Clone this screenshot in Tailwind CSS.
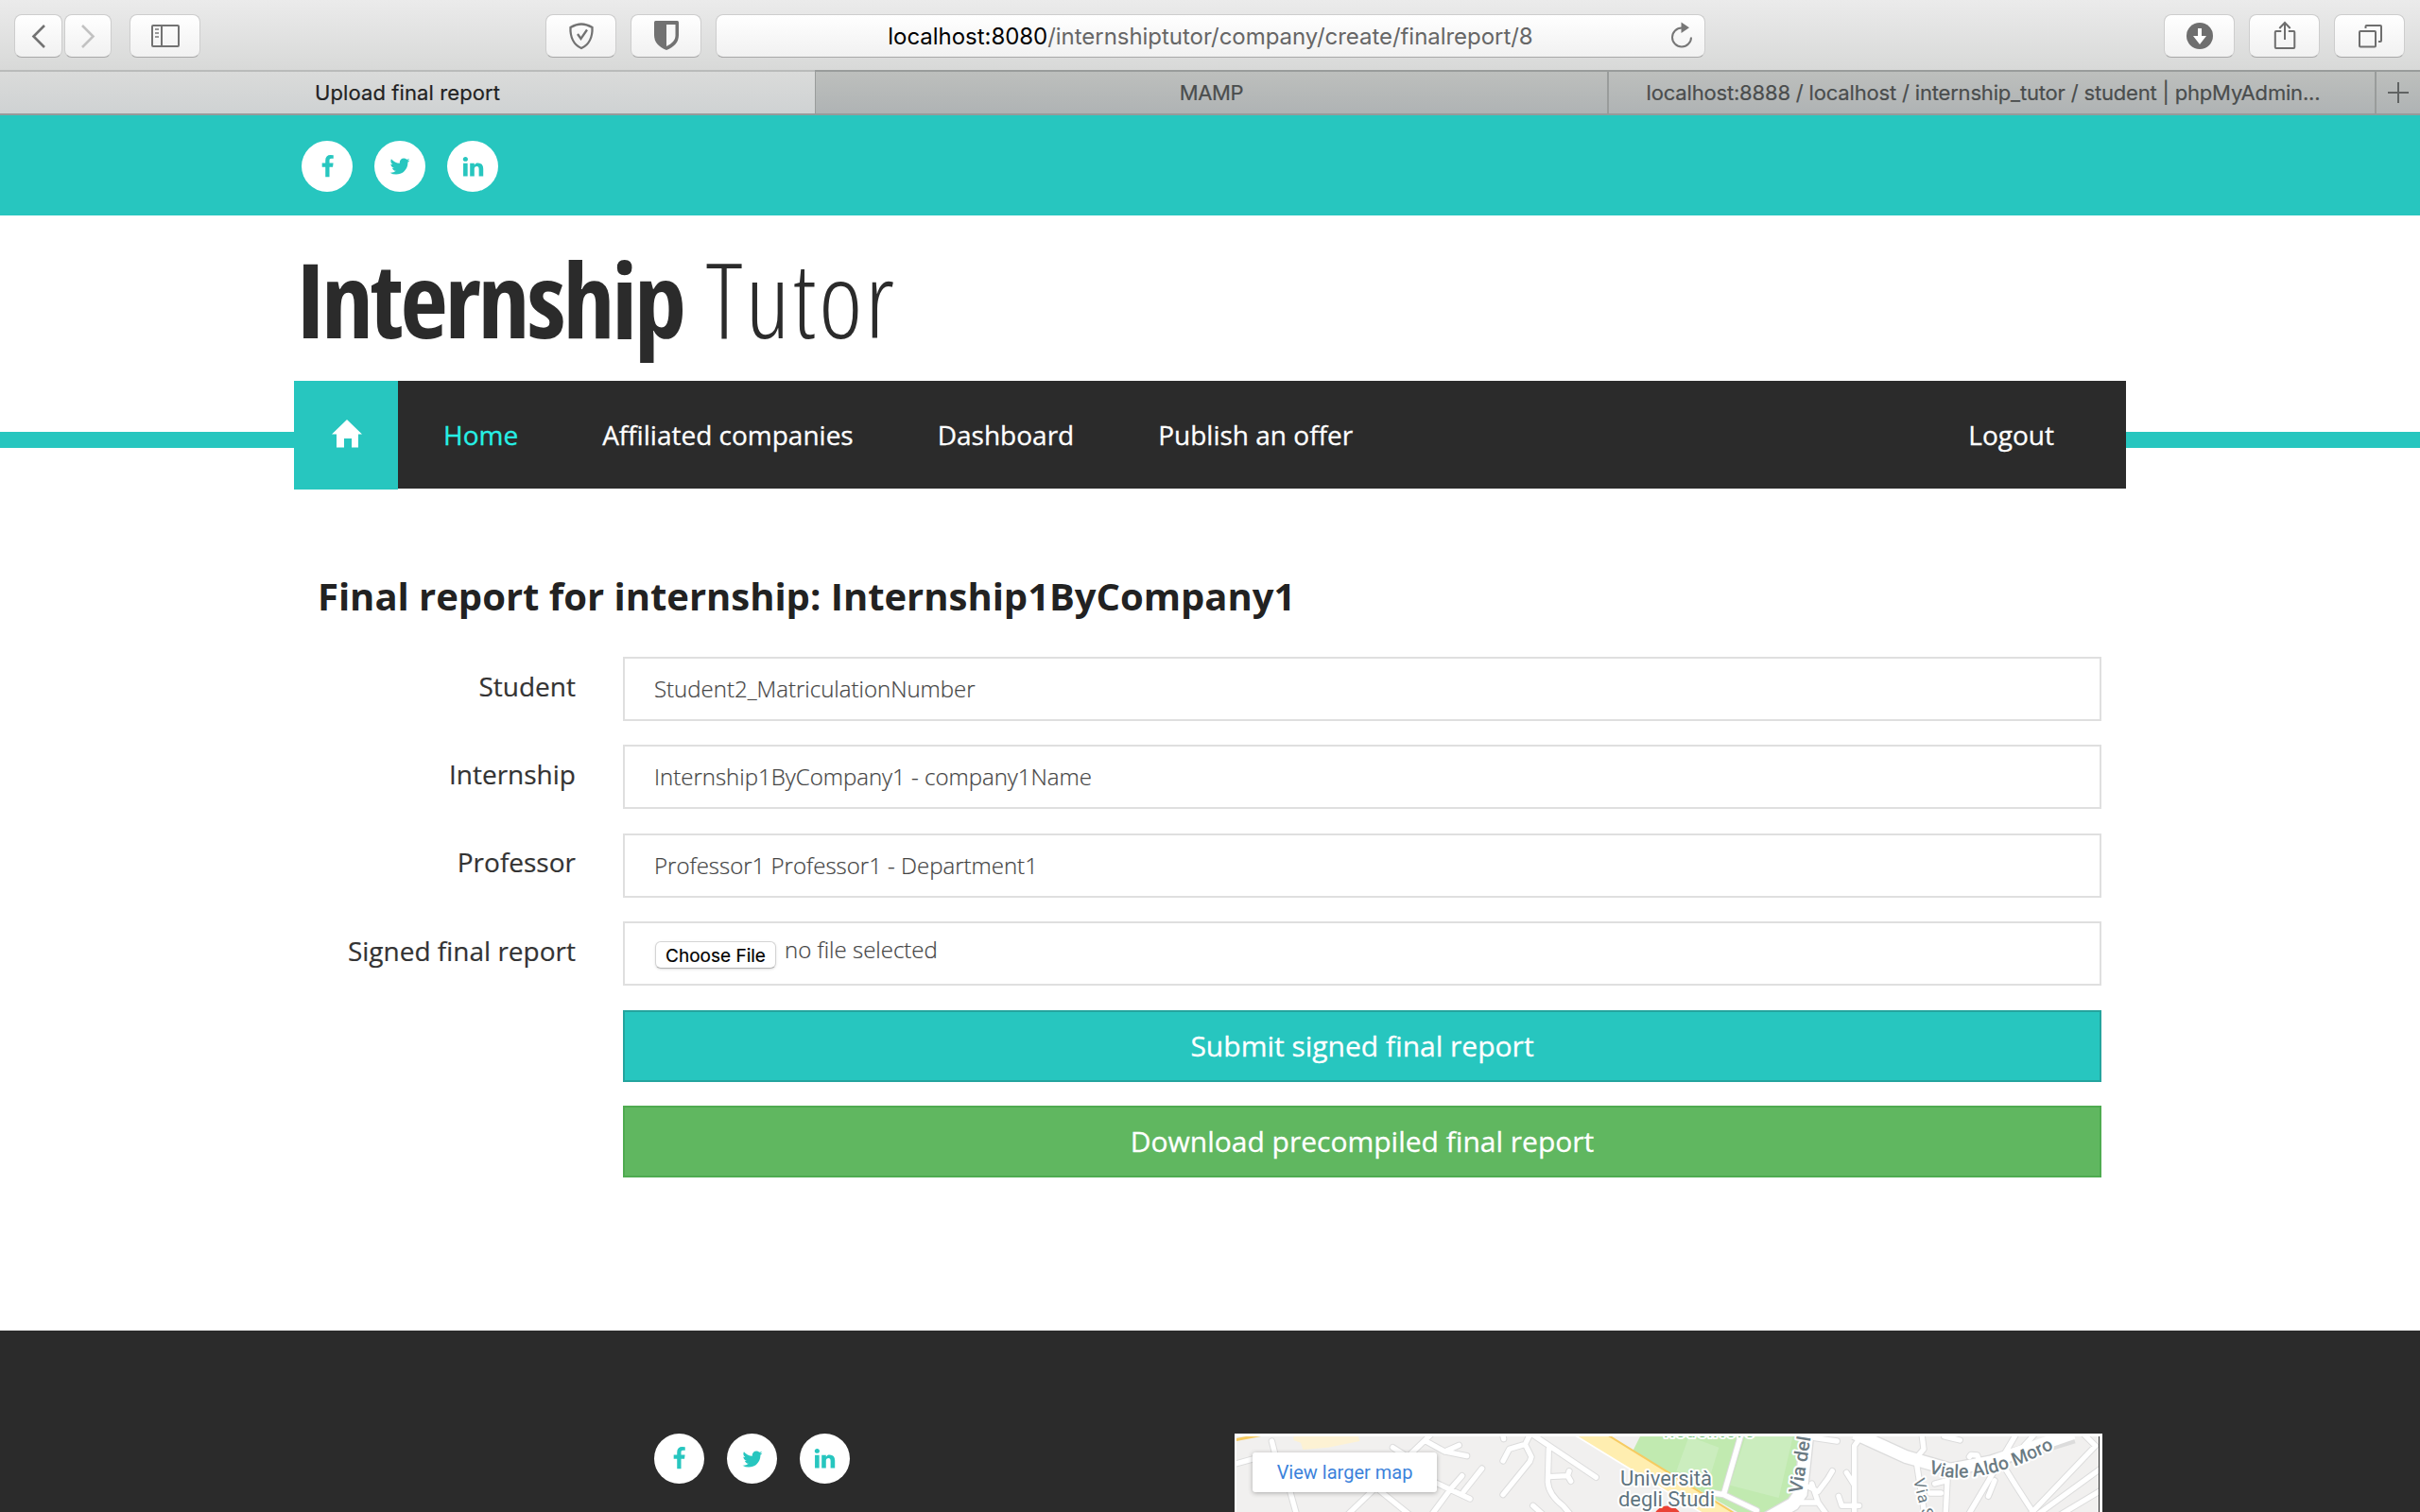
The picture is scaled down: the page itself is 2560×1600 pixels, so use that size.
<!DOCTYPE html>
<html lang="en">
<head>
<meta charset="utf-8">
<title>Upload final report</title>
<script src="https://cdn.jsdelivr.net/npm/@tailwindcss/browser@4"></script>
</head>
<body class="bg-white w-[2560px] h-[1600px] overflow-hidden flex flex-col font-['Open_Sans',sans-serif] text-[#333]">

<!-- shared social glyphs -->
<svg class="hidden">
  <symbol id="fb" viewBox="0 0 1792 1792"><path d="M1343 12v264h-157q-86 0-116 36t-30 108v189h293l-39 296h-254v759h-306v-759h-255v-296h255v-218q0-186 104-288.5t277-102.5q147 0 228 12z"/></symbol>
  <symbol id="tw" viewBox="0 0 1792 1792"><path d="M1684 408q-67 98-162 167 1 14 1 42 0 130-38 259.5t-115.500 248.500-184.500 210.500-258 146-323 54.500q-271 0-492-145 35 4 78 4 225 0 401-138-105-2-188-64.500t-114-159.500q33 5 61 5 43 0 85-11-112-23-185.500-111.500t-73.500-205.500v-4q68 38 146 41-66-44-105-115t-39-154q0-88 44-163 121 149 294.500 238.500t371.500 99.500q-8-38-8-74 0-134 94.500-228.500t228.500-94.500q140 0 236 102 109-21 205-78-37 115-142 178 93-10 186-50z"/></symbol>
  <symbol id="li" viewBox="0 0 1792 1792"><path d="M477 625v991h-330v-991h330zm21-306q1 73-50.500 122t-135.500 49h-2q-82 0-132-49t-50-122q0-74 51.500-122.500t134.500-48.500 133 48.500 51 122.500zm1166 729v568h-329v-530q0-105-40.500-164.500t-126.500-59.500q-63 0-105.500 34.500t-63.500 85.500q-11 30-11 81v553h-329q2-399 2-647t-1-296l-1-48h329v144h-2q20-32 41-56t56.500-52 87-43.500 114.500-15.500q171 0 275 113.500t104 332.500z"/></symbol>
</svg>

<!-- Browser toolbar -->
<header class="h-[74px] shrink-0 flex items-start pt-[15px] pl-[15px] pr-4 bg-linear-to-b from-[#ebebeb] to-[#d8d9d8] font-[Inter,sans-serif]">
  <button class="w-[51px] h-[46px] rounded-lg border border-[#cdcdcd] border-b-[#a8a8a8] bg-linear-to-b from-white to-[#f1f1f1]"><svg class="-m-px" width="51" height="46" fill="none" stroke="#727272" stroke-width="2.6"><path d="M32 12 20.500 23.500 32 35"/></svg></button>
  <button class="ml-[2px] w-[50px] h-[46px] rounded-lg border border-[#cdcdcd] border-b-[#a8a8a8] bg-linear-to-b from-white to-[#f1f1f1]"><svg class="-m-px" width="50" height="46" fill="none" stroke="#c2c2c2" stroke-width="2.600"><path d="M19 12 30.500 23.500 19 35"/></svg></button>
  <button class="ml-[19px] w-[75px] h-[46px] rounded-lg border border-[#cdcdcd] border-b-[#a8a8a8] bg-linear-to-b from-white to-[#f1f1f1]"><svg class="-m-px" width="74" height="46" fill="none" stroke="#727272" stroke-width="2"><rect x="24" y="12" width="28" height="22" rx="1"/><path d="M34 12v22"/><path stroke="#999" d="M27 16h4M27 20h4M27 24h4"/></svg></button>
  <button class="ml-[365px] w-[75px] h-[46px] rounded-lg border border-[#cdcdcd] border-b-[#a8a8a8] bg-linear-to-b from-white to-[#f1f1f1]"><svg class="-m-px" width="74" height="46" fill="none" stroke="#727272" stroke-width="2.300"><path d="M38 10.500C34 10.500 30 12 26.500 14C26 24 30 32.500 38 36C46 32.500 50 24 49.500 14C46 12 42 10.500 38 10.500Z"/><path d="m34 21 3.500 5 6.500-9.500"/></svg></button>
  <button class="ml-[15px] w-[75px] h-[46px] rounded-lg border border-[#cdcdcd] border-b-[#a8a8a8] bg-linear-to-b from-white to-[#f1f1f1]"><svg class="-m-px" width="75" height="46"><g transform="translate(1)"><path fill="#727272" d="M25.500 7h23q1.500 0 1.500 1.500V22c0 8-5 12.500-13 16-8-3.500-13-8-13-16V8.500Q24 7 25.500 7Z"/><path fill="#f8f8f8" d="M37 11h9.500v11.500c0 5-3.500 8.500-9.500 11.500Z"/></g></svg></button>
  <div class="ml-[15px] w-[1047px] h-[46px] rounded-lg border border-[#cdcdcd] border-b-[#a8a8a8] bg-linear-to-b from-white to-[#f1f1f1] flex items-center text-[24px] text-[#666]">
    <div class="w-12"></div>
    <div class="flex-1 pt-[2px] text-center whitespace-nowrap tracking-[-0.04px]"><span class="text-black">localhost:8080</span>/internshiptutor/company/create/finalreport/8</div>
    <svg class="w-12" width="48" height="44" viewBox="1756 16 48 44"><path d="M1780 29.500a10 10 0 1 0 10 10" fill="none" stroke="#777" stroke-width="2"/><path fill="#777" d="M1779.500 23.500v11.500l8.500-5.700Z"/></svg>
  </div>
  <button class="ml-auto w-[75px] h-[46px] rounded-lg border border-[#cdcdcd] border-b-[#a8a8a8] bg-linear-to-b from-white to-[#f1f1f1]"><svg class="-m-px" width="75" height="46"><circle cx="38" cy="23" r="14" fill="#6e6e6e"/><path fill="#fff" d="M36 15h4v8h5l-7 9-7-9h5Z"/></svg></button>
  <button class="ml-[15px] w-[75px] h-[46px] rounded-lg border border-[#cdcdcd] border-b-[#a8a8a8] bg-linear-to-b from-white to-[#f1f1f1]"><svg class="-m-px" width="75" height="46" fill="none" stroke="#6e6e6e" stroke-width="2"><path transform="translate(.8)" d="M33.500 18H28q-1 0-1 1V35q0 1 1 1h18.500q1 0 1-1V19q0-1-1-1H41M37.200 27V9M31.500 15l5.700-6 5.700 6"/></svg></button>
  <button class="ml-[15px] w-[75px] h-[46px] rounded-lg border border-[#cdcdcd] border-b-[#a8a8a8] bg-linear-to-b from-white to-[#f1f1f1]"><svg class="-m-px" width="75" height="46" fill="none" stroke="#6e6e6e" stroke-width="2"><rect x="27" y="18" width="17" height="16.500" rx="1"/><path d="M33.500 15v-2q0-1 1-1H49q1 0 1 1v15q0 1-1 1h-2"/></svg></button>
</header>

<!-- Tabs -->
<div class="h-12 shrink-0 flex font-[Inter,sans-serif] text-[22px] leading-[44px] text-center text-[#4a4d4d] whitespace-nowrap border-b-2 border-[#969a9a] [-webkit-text-stroke:0.2px]">
  <div class="w-[862px] border-t-2 border-[#b9bbba] bg-linear-to-b from-[#dadbda] to-[#cfd2d3] text-[#222] tracking-[0.1px]">Upload final report</div>
  <div class="w-[838px] border-t-2 border-l border-[#999c9b] bg-linear-to-b from-[#bdbfbd] to-[#afb3b4] tracking-[-0.4px]">MAMP</div>
  <div class="w-[812px] border-t-2 border-l-2 border-[#999c9b] bg-linear-to-b from-[#bdbfbd] to-[#afb3b4] pr-[18px] tracking-[-0.18px]">localhost:8888 / localhost / internship_tutor / student | phpMyAdmin...</div>
  <div class="flex-1 border-t-2 border-l-2 border-[#999c9b] bg-linear-to-b from-[#bdbfbd] to-[#afb3b4]"><svg class="ml-[11px] mt-[10px]" width="24" height="24" stroke="#606363" stroke-width="2"><path d="M12 1v22M1 12h22"/></svg></div>
</div>

<!-- Site top strip -->
<div class="h-[106px] shrink-0 bg-[#27c6bf] pt-[27px] pl-[319px] flex gap-[23px] text-[#27c6bf]">
  <a class="size-[54px] rounded-full bg-white flex items-center justify-center"><svg class="size-[25px]" fill="currentColor"><use href="#fb"/></svg></a>
  <a class="size-[54px] rounded-full bg-white flex items-center justify-center"><svg class="size-[24px]" fill="currentColor"><use href="#tw"/></svg></a>
  <a class="size-[54px] rounded-full bg-white flex items-center justify-center"><svg class="size-[25px]" fill="currentColor"><use href="#li"/></svg></a>
</div>

<!-- Logo -->
<div class="h-[175px] shrink-0 pl-[314px] pt-[12px] text-[110px] leading-[150px] text-[#2b2b2b] whitespace-nowrap flex [font-stretch:75%]">
  <span class="font-bold tracking-[-3.2px]">Internship</span>
  <span class="font-light tracking-[2.9px] ml-[24px]">Tutor</span>
</div>

<!-- Navigation -->
<div class="h-[115px] shrink-0 flex">
  <div class="w-[311px] h-[17px] mt-[54px] bg-[#27c6bf]"></div>
  <a class="w-[110px] h-[115px] bg-[#27c6bf] flex justify-center pt-[41px] pl-px"><svg width="32" height="30" fill="#fff"><path d="M16 0 32 15.500h-4V29.500h-7V20h-8v9.500H5V15.500H0Z"/></svg></a>
  <nav class="w-[1828px] h-[114px] bg-[#2b2b2b] flex items-center gap-[89px] pl-[48px] pr-[76px] text-[28px] text-white [-webkit-text-stroke:0.3px]">
    <a class="text-[#26f0e6]">Home</a>
    <a>Affiliated companies</a>
    <a>Dashboard</a>
    <a>Publish an offer</a>
    <a class="ml-auto">Logout</a>
  </nav>
  <div class="flex-1 h-[17px] mt-[54px] bg-[#27c6bf]"></div>
</div>

<!-- Report form -->
<main class="shrink-0 h-[890px] pl-[336px] pr-[337px]">
  <h1 class="mt-[83px] mb-[34px] font-bold text-[40px] leading-[60px] text-[#222] whitespace-nowrap tracking-[-0.02px]">Final report for internship: Internship1ByCompany1</h1>
  <div class="grid grid-cols-[273px_1fr] gap-x-[50px] gap-y-[25.3px] auto-rows-[68px] text-[28px] [-webkit-text-stroke:0.2px]">
    <label class="flex items-center justify-end pb-[7px]">Student</label>
    <div class="border-2 border-[#dfdfdf] flex items-center pl-[31px] font-light text-[24px] text-[#444]">Student2_MatriculationNumber</div>
    <label class="flex items-center justify-end pb-[7px]">Internship</label>
    <div class="border-2 border-[#dfdfdf] flex items-center pl-[31px] font-light text-[24px] text-[#444]">Internship1ByCompany1 - company1Name</div>
    <label class="flex items-center justify-end pb-[7px]">Professor</label>
    <div class="border-2 border-[#dfdfdf] flex items-center pl-[31px] font-light text-[24px] text-[#444]">Professor1 Professor1 - Department1</div>
    <label class="flex items-center justify-end pb-[6px]">Signed final report</label>
    <div class="border-2 border-[#dfdfdf] flex items-start pl-[32px] font-light text-[24px] text-[#444]">
      <button class="mt-[19px] w-[128px] h-[29px] rounded-md border border-[#d4d4d4] border-b-[#b4b4b4] bg-white font-[Inter,sans-serif] font-normal text-[19px] leading-[30px] text-black shadow-sm">Choose File</button>
      <span class="ml-[9px] mt-[10px] leading-[36px]">no file selected</span>
    </div>
  </div>
  <div class="ml-[323px] mt-[26px] flex flex-col gap-[25px] text-[30px] text-white [-webkit-text-stroke:0.3px]">
    <button class="h-[76px] border-2 border-[#24a49e] bg-[#27c6bf]">Submit signed final report</button>
    <button class="h-[76px] border-2 border-[#4fab50] bg-[#60b760]">Download precompiled final report</button>
  </div>
</main>

<!-- Footer -->
<footer class="flex-1 bg-[#2b2b2b] flex justify-between pt-[109px] pl-[692px] pr-[336px] text-[#27c6bf]">
  <div class="flex gap-6">
    <a class="size-[53px] rounded-full bg-white flex items-center justify-center"><svg class="size-[25px]" fill="currentColor"><use href="#fb"/></svg></a>
    <a class="size-[53px] rounded-full bg-white flex items-center justify-center"><svg class="size-[24px]" fill="currentColor"><use href="#tw"/></svg></a>
    <a class="size-[53px] rounded-full bg-white flex items-center justify-center"><svg class="size-[25px]" fill="currentColor"><use href="#li"/></svg></a>
  </div>
  <div class="relative w-[918px] h-[83px] bg-white">
    <svg class="block" width="918" height="83" viewBox="0 0 918 83">
      <defs>
        <clipPath id="mapclip"><rect x="2" y="3" width="913" height="80"/></clipPath>
        <path id="aldo" d="M734 41Q786 62 885 6"/>
        <g id="streets" fill="none" stroke-linecap="round" stroke-linejoin="round">
          <path d="M10 120 90 98M136 45 155 120M190 190 218 290M370 285 640 25M470 195 575 280M575 100 520 65M625 45 685 78 755 92M685 78 730 58M620 160 765 228M740 155 705 195 635 290M803 132 745 205M872 38 868 20M870 108 890 70 940 55 960 95 955 110 870 215M940 55 955 25M965 25 1165 160M1015 70 1012 175Q1015 215 1060 250L1090 285M1015 158 1075 155 1085 172M1075 155 1080 140M965 250 1010 290"/>
          <path d="M1625 25 1570 215 1675 265M1570 215 1540 210M1850 180 1870 240 1895 275M1810 240H1870M1840 190 1870 205 1900 165 1915 140M1960 145 1985 185 1985 270M1935 220 1945 250 2000 250M1985 190V60L2010 25M1860 35 1930 45M2200 30 2205 70 2180 100 2205 260M2270 30 2320 42M2340 290 2500 20M2275 270 2280 170 2240 180M2260 210H2225M2350 95 2355 88 2375 90 2390 130M2430 170 2410 220M2450 110 2500 190 2545 260M2510 75 2560 20M2540 280 2750 60 2710 20M2550 290 2770 130M2620 290 2770 200"/>
        </g>
      </defs>
      <g clip-path="url(#mapclip)">
        <rect width="918" height="83" fill="#f1f0ef"/>
        <g transform="translate(-6 -7) scale(.33333)">
          <path fill="#fdf2d4" d="M205 25H410L415 45 315 65 235 72 228 50 205 42Z"/>
          <path stroke="#f6cb62" stroke-width="9" d="M15 42 110 24"/>
          <path fill="#c1eab0" d="M1310 20H1835L1810 190 1790 230 1710 285H1640L1280 80Z"/>
          <path fill="#cbedbe" d="M1460 30 1555 65 1520 180 1420 140ZM1640 30H1790L1745 225 1590 185Z"/>
          <use href="#streets" stroke="#dcdcdc" stroke-width="22"/>
          <path stroke="#dcdcdc" stroke-width="46" fill="none" d="M1985 20 2150 95 2290 135 2420 110 2680 30"/>
          <path stroke="#dcdcdc" stroke-width="48" fill="none" d="M1835 20 1815 210 1790 245 1710 290"/>
          <use href="#streets" stroke="#fff" stroke-width="16"/>
          <path stroke="#fff" stroke-width="38" fill="none" d="M1985 20 2150 95 2290 135 2420 110 2680 20"/>
          <path stroke="#fff" stroke-width="40" fill="none" d="M1835 20 1815 210 1790 245 1710 290"/>
          <path stroke="#fff" stroke-width="16" d="M1090 15 1540 290"/>
          <path stroke="#ffeeb0" stroke-width="52" d="M1110 0 1600 300"/>
          <path stroke="#f6cb62" stroke-width="6" d="M1185 15 1630 290"/>
        </g>
        <circle cx="458" cy="92" r="15.500" fill="#ea4335"/>
        <g font-family="Roboto, sans-serif" fill="#5f7580" stroke="#fff" stroke-width="4" stroke-linejoin="round" paint-order="stroke">
          <text x="408" y="54.500" font-size="22" textLength="97">Università</text>
          <text x="406" y="77" font-size="22" textLength="102">degli Studi</text>
          <text x="454" y="4" font-size="17" font-weight="500" fill="#6fbf7b" textLength="95">Redentore</text>
          <text transform="translate(600 64) rotate(-81)" font-size="20" font-weight="500" fill="#6b7b83">Via del Re</text>
          <text font-size="19.500" font-weight="500" fill="#6b7b83"><textPath href="#aldo">Viale Aldo Moro</textPath></text>
          <text transform="translate(718 49) rotate(76)" font-size="17" fill="#6b7b83" letter-spacing="1">Via Sa</text>
        </g>
      </g>
      <path d="M914.500 3V83" stroke="#2b2b2b"/>
    </svg>
    <a class="absolute left-[19px] top-5 w-[195px] h-[42px] rounded-[3px] bg-white text-center font-[Roboto,sans-serif] text-[20px] leading-[42px] text-[#3b82db] shadow-[0_1px_5px_rgba(0,0,0,0.3)]">View larger map</a>
  </div>
</footer>
</body>
</html>
